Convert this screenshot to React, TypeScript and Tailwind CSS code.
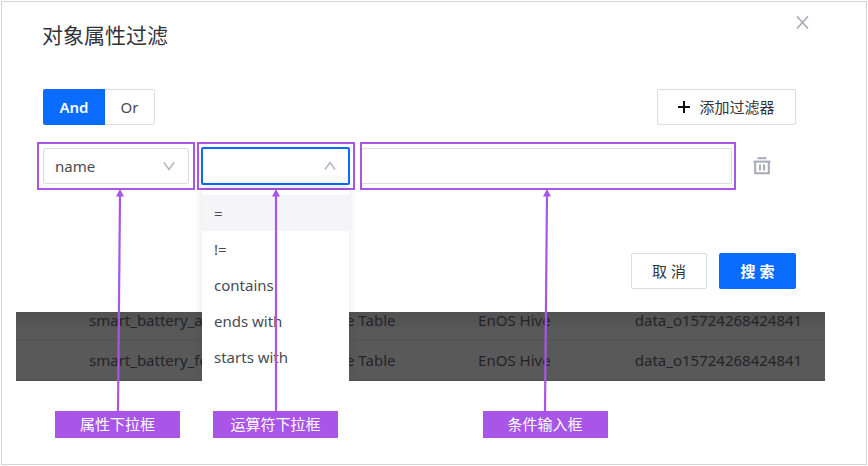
import React, { useState } from 'react';

const operators = ['=', '!=', 'contains', 'ends with', 'starts with'];

const rows = [
  { name: 'smart_battery_a', type: 'Hive Table', source: 'EnOS Hive', id: 'data_o15724268424841' },
  { name: 'smart_battery_fo', type: 'Hive Table', source: 'EnOS Hive', id: 'data_o15724268424841' },
];

const Chevron: React.FC<{ up?: boolean }> = ({ up }) => (
  <svg
    className="pointer-events-none absolute right-[14px] top-1/2 h-3 w-3 -translate-y-1/2"
    viewBox="0 0 12 12"
    fill="none"
    stroke="#b4b4c2"
    strokeWidth="1.5"
  >
    <path d={up ? 'M1 9.5 6 2.5 11 9.5' : 'M1 2.5 6 9.5 11 2.5'} />
  </svg>
);

const TrashIcon = () => (
  <svg className="h-[18px] w-[18px]" viewBox="0 0 18 18" fill="none" stroke="#a9a9b8" strokeWidth="2">
    <path d="M4.5 1.2h9" />
    <path d="M0.5 4.6h17" />
    <path d="M2.2 4.4v11.9h13.6V4.4" />
    <path d="M7 7.5v6M11 7.5v6" />
  </svg>
);

interface CalloutProps {
  text: string;
  slant?: boolean;
}

// Label with an arrow that points up at the field above it
const Callout: React.FC<CalloutProps> = ({ text, slant }) => (
  <div className="relative w-[125px] bg-[#a855e8] text-center leading-[27px] text-white">
    <svg
      className="absolute bottom-full left-1/2 h-[222px] w-3 -translate-x-1/2"
      viewBox="0 0 12 222"
      fill="#a855e8"
      stroke="#a855e8"
    >
      <path d={slant ? 'M8 5 6 222' : 'M6 5 6 222'} strokeWidth="2.2" />
      <path d={slant ? 'M8 0 12 7.5H4z' : 'M6 0 10 7.5H2z'} stroke="none" />
    </svg>
    {text}
  </div>
);

const App: React.FC = () => {
  const [logic, setLogic] = useState('And');
  const [operator, setOperator] = useState('');
  const [open, setOpen] = useState(true);

  return (
    <div className="relative m-px border border-[#d4d4d4] bg-white pb-[26px] pt-[19px] font-['Noto_Sans','Noto_Sans_CJK_SC',sans-serif] text-[15px] text-[#4a4a52]">
      <button aria-label="关闭" className="absolute right-[57px] top-[14px] h-[13px] w-[13px]">
        <svg viewBox="0 0 13 13" fill="none" stroke="#a9a9b8" strokeWidth="1.6">
          <path d="M1 0.5 12 12.5M12 0.5 1 12.5" />
        </svg>
      </button>

      <h1 className="pl-10 text-[21px] leading-7 text-[#33333a]">对象属性过滤</h1>

      <div className="mt-10 flex h-9 justify-between pl-[41px] pr-[70px]">
        <div className="flex">
          <button
            onClick={() => setLogic('And')}
            aria-pressed={logic === 'And'}
            className="w-[62px] rounded-l-xs bg-[#0a6cff] font-semibold text-white"
          >
            And
          </button>
          <button
            onClick={() => setLogic('Or')}
            aria-pressed={logic === 'Or'}
            className="w-[50px] rounded-r-xs border border-l-0 border-[#dcdce6]"
          >
            Or
          </button>
        </div>
        <button className="flex w-[139px] items-center justify-center gap-[9px] rounded-xs border border-[#dcdce6] text-[#33333a]">
          <svg className="h-3 w-3" viewBox="0 0 12 12" stroke="#111" strokeWidth="2">
            <path d="M6 0v12M0 6h12" />
          </svg>
          添加过滤器
        </button>
      </div>

      <div className="mt-[17px] flex items-center pl-[35px] pr-[94px]">
        <div className="mr-[2px] w-[158px] border-2 border-[#a855e8] p-1">
          <div className="relative">
            <select
              aria-label="属性下拉框"
              className="block h-9 w-full appearance-none rounded-xs border border-[#dcdce6] bg-white px-[11px] outline-none"
            >
              <option>name</option>
            </select>
            <Chevron />
          </div>
        </div>

        <div className="relative mr-[5px] w-[158px] border-2 border-[#a855e8] py-[3px] pl-[2px] pr-[3px]">
          <div className="relative">
            <select
              aria-label="运算符下拉框"
              value={operator}
              onChange={(e) => setOperator(e.target.value)}
              onMouseDown={(e) => {
                e.preventDefault();
                setOpen(!open);
              }}
              className="block h-[38px] w-full appearance-none rounded-xs border-2 border-[#0a6cff] bg-white px-[10px] outline-none"
            >
              <option value=""></option>
              {operators.map((op) => (
                <option key={op}>{op}</option>
              ))}
            </select>
            <Chevron up={open} />
          </div>
          {open && (
            <ul className="absolute left-[3px] right-1 top-full z-10 mt-[2px] bg-white pb-[7px] pt-[5px] shadow-[0_-6px_10px_rgba(0,0,0,0.1)]">
              {operators.map((op, i) => (
                <li key={op}>
                  <button
                    onClick={() => {
                      setOperator(op);
                      setOpen(false);
                    }}
                    className={`block h-9 w-full px-3 text-left ${i === 0 ? 'bg-[#f4f4f9]' : ''}`}
                  >
                    {op}
                  </button>
                </li>
              ))}
            </ul>
          )}
        </div>

        <div className="z-10 min-w-0 flex-1 border-2 border-[#a855e8] py-1 pr-[2px]">
          <input
            type="text"
            aria-label="条件输入框"
            className="block h-9 w-full rounded-r-xs border border-l-0 border-[#dcdce6] px-3 outline-none"
          />
        </div>
        <button aria-label="删除" className="ml-[17px] mr-px shrink-0">
          <TrashIcon />
        </button>
      </div>

      <div className="mt-[63px] flex h-9 justify-end gap-3 pr-[70px]">
        <button className="w-[76px] rounded-xs border border-[#dcdce6] text-[#33333a]">取 消</button>
        <button className="w-[77px] rounded-xs bg-[#0a6cff] font-semibold text-white">搜 索</button>
      </div>

      <div className="ml-[14px] mr-[41px] mt-[23px] bg-[#595959] bg-linear-to-b from-[#515151] to-[#595959] to-30% text-[#242428]">
        <table className="w-full table-fixed leading-4">
          <tbody>
            {rows.map((row) => (
              <tr key={row.name} className="h-[41px] border-b border-[#505050] first:h-[27px] first:align-top">
                <td className="w-[38%] pl-[73px]">{row.name}</td>
                <td className="w-[19%]">{row.type}</td>
                <td className="w-[19%] pl-px">{row.source}</td>
                <td className="pl-1">{row.id}</td>
              </tr>
            ))}
          </tbody>
        </table>
      </div>

      <div className="relative z-20 mt-[30px] flex pl-[53px] pr-[130px]">
        <Callout text="属性下拉框" slant />
        <div className="ml-[33px]">
          <Callout text="运算符下拉框" />
        </div>
        <div className="flex flex-1 justify-center pl-4">
          <Callout text="条件输入框" slant />
        </div>
      </div>
    </div>
  );
};

export default App;
